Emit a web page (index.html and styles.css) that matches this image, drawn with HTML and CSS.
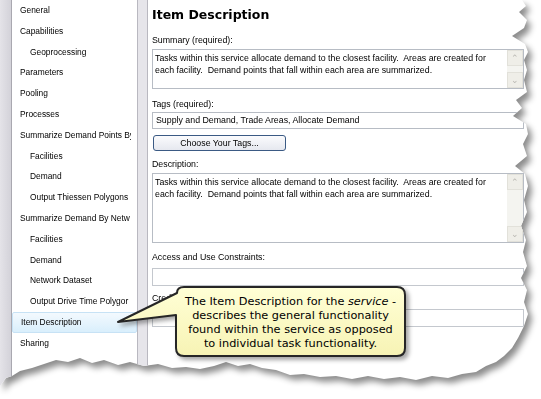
FILE: index.html
```html
<!DOCTYPE html>
<html lang="en">
<head>
  <meta charset="UTF-8" />
  <title>Item Description</title>
  <link rel="stylesheet" href="styles.css">
</head>
<body>
  <div class="sheet">
    <div class="page">
      <div class="rail"></div>

      <!-- tree of settings pages -->
      <nav class="tree">
        <div class="node">General</div>
        <div class="node">Capabilities</div>
        <div class="node sub">Geoprocessing</div>
        <div class="node">Parameters</div>
        <div class="node">Pooling</div>
        <div class="node">Processes</div>
        <div class="node">Summarize Demand Points By</div>
        <div class="node sub">Facilities</div>
        <div class="node sub">Demand</div>
        <div class="node sub">Output Thiessen Polygons</div>
        <div class="node">Summarize Demand By Netw</div>
        <div class="node sub">Facilities</div>
        <div class="node sub">Demand</div>
        <div class="node sub">Network Dataset</div>
        <div class="node sub">Output Drive Time Polygor</div>
        <div class="node selected">Item Description</div>
        <div class="node">Sharing</div>
      </nav>

      <div class="splitter"></div>

      <!-- item description form -->
      <main class="form">
        <h1 class="title">Item Description</h1>

        <label class="field-label summary">Summary (required):</label>
        <div class="memo short">
          <div class="memo-text">Tasks within this service allocate demand to the closest facility.&nbsp; Areas are created for each facility.&nbsp; Demand points that fall within each area are summarized.</div>
          <div class="scroll">
            <span class="arrow">&#8963;</span>
            <span class="arrow">&#8964;</span>
          </div>
        </div>

        <label class="field-label tags">Tags (required):</label>
        <div class="textbox">Supply and Demand, Trade Areas, Allocate Demand</div>

        <button class="btn">Choose Your Tags...</button>

        <label class="field-label desc">Description:</label>
        <div class="memo tall">
          <div class="memo-text">Tasks within this service allocate demand to the closest facility.&nbsp; Areas are created for each facility.&nbsp; Demand points that fall within each area are summarized.</div>
          <div class="scroll">
            <span class="arrow">&#8963;</span>
            <span class="arrow">&#8964;</span>
          </div>
        </div>

        <label class="field-label access">Access and Use Constraints:</label>
        <div class="textbox wide"></div>

        <label class="field-label credits">Credits:</label>
        <div class="textbox wide"></div>
      </main>
    </div>
  </div>

  <!-- callout over the form -->
  <div class="callout">
    <svg class="callout-shape" width="310" height="90" viewBox="0 0 310 90">
      <defs>
        <linearGradient id="note" x1="0" y1="0" x2="0" y2="1">
          <stop offset="0" stop-color="#ffffd6"/>
          <stop offset="1" stop-color="#f7f3b4"/>
        </linearGradient>
      </defs>
      <path d="M8,42 L67,13 Q67,7 74,7 L287,7 Q295,7 295,15 L295,68 Q295,76 287,76 L74,76 Q66,76 66,68 L66,35 Z"
            fill="url(#note)" stroke="#262626" stroke-width="2" stroke-linejoin="round"/>
    </svg>
    <div class="callout-text">
      The Item Description for the <i>service</i> -<br>
      describes the general functionality<br>
      found within the service as opposed<br>
      to individual task functionality.
    </div>
  </div>
</body>
</html>
```

FILE: styles.css
```css
body {
  margin: 0;
  background: #fff;
  font-family: 'Liberation Sans', Arial, sans-serif;
  color: #000;
  width: 541px;
  height: 399px;
  overflow: hidden;
  position: relative;
}

/* torn paper look */
.sheet {
  filter: drop-shadow(4px 5px 3px rgba(0, 0, 0, 0.45));
}

.page {
  display: flex;
  height: 399px;
  background: #fff;
  clip-path: polygon(0 0, 522px 0, 526px 6px, 519px 12px, 527px 20px, 524px 28px, 512px 36px, 525px 44px, 528px 52px, 524px 60px, 527px 70px, 524px 80px, 527px 92px, 516px 100px, 522px 108px, 513px 116px, 526px 124px, 528px 134px, 523px 144px, 527px 156px, 515px 166px, 525px 174px, 528px 186px, 524px 200px, 527px 212px, 521px 226px, 526px 240px, 523px 252px, 527px 266px, 521px 278px, 527px 290px, 524px 302px, 528px 314px, 524px 326px, 518px 338px, 512px 348px, 504px 356px, 496px 362px, 486px 366px, 476px 372px, 462px 374px, 448px 378px, 432px 376px, 416px 380px, 400px 377px, 384px 379px, 368px 376px, 352px 379px, 336px 376px, 320px 377px, 304px 374px, 290px 375px, 276px 370px, 262px 368px, 250px 364px, 238px 366px, 226px 362px, 214px 366px, 200px 369px, 186px 367px, 172px 368px, 158px 364px, 144px 366px, 130px 362px, 118px 365px, 104px 360px, 92px 363px, 80px 358px, 68px 362px, 56px 360px, 44px 364px, 32px 368px, 20px 371px, 12px 376px, 6px 378px, 0 386px);
}

.rail {
  width: 11px;
  background: linear-gradient(90deg, #e4e3e8, #d3d2d9);
  border-right: 1px solid #a9a8b0;
  flex-shrink: 0;
}

/* 樹狀選單 */
.tree {
  width: 125px;
  flex-shrink: 0;
  font-size: 8.4px;
  overflow: hidden;
}

.node {
  height: 20.8px;
  line-height: 20.8px;
  padding-left: 8px;
  margin-right: 6px;
  white-space: nowrap;
  overflow: hidden;
}

.node.sub {
  padding-left: 18px;
}

.node.selected {
  margin-right: 0;
  background: linear-gradient(#f3f9fe, #d9effc);
  border: 1px solid #c7e2f5;
  border-radius: 2px;
  line-height: 18.8px;
  height: 18.8px;
}

.splitter {
  width: 9px;
  flex-shrink: 0;
  background: #e6e5ea;
  border-left: 1px solid #b9b8c0;
  border-right: 1px solid #b9b8c0;
}

/* 表單 */
.form {
  flex: 1;
  padding: 0 17px 0 4px;
  display: flex;
  flex-direction: column;
  align-items: flex-start;
  font-size: 8.8px;
}

.title {
  font-family: 'DejaVu Sans', Verdana, sans-serif;
  font-weight: bold;
  font-size: 12.5px;
  margin: 7px 0 0;
  line-height: 15px;
}

.field-label {
  display: block;
  line-height: 10px;
}

.field-label.summary { margin-top: 13px; }
.field-label.tags { margin-top: 10px; }
.field-label.desc { margin-top: 8px; }
.field-label.access { margin-top: 9px; }
.field-label.credits { margin-top: 7px; }

.memo {
  align-self: stretch;
  display: flex;
  border: 1px solid #b7bcc4;
  margin-top: 4px;
}

.memo.short {
  height: 38px;
}

.memo.tall {
  height: 68px;
}

.memo-text {
  flex: 1;
  padding: 2px 2px 0 2px;
  line-height: 12px;
}

.scroll {
  width: 16px;
  display: flex;
  flex-direction: column;
  justify-content: space-between;
  background: #f4f4f0;
}

.arrow {
  height: 16px;
  background: #efeee8;
  border: 1px solid #e2e1da;
  color: #b9b8b2;
  font-size: 9px;
  line-height: 14px;
  text-align: center;
  box-sizing: border-box;
}

.textbox {
  align-self: stretch;
  height: 15px;
  border: 1px solid #b7bcc4;
  margin-top: 3px;
  padding: 0 3px;
  line-height: 15px;
  white-space: nowrap;
}

.textbox.wide {
  height: 16px;
  margin-top: 6px;
  border-color: #c4c8ce;
}

.btn {
  margin-top: 6px;
  margin-left: 1px;
  width: 133px;
  height: 16px;
  padding: 0;
  font-family: 'Liberation Sans', Arial, sans-serif;
  font-size: 8.8px;
  color: #000;
  background: linear-gradient(#fbfbfd, #e6e8ef);
  border: 1px solid #3b5a84;
  border-radius: 3px;
}

/* 說明框 */
.callout {
  position: absolute;
  left: 110px;
  top: 280px;
  width: 310px;
  height: 90px;
}

.callout-shape {
  display: block;
  filter: drop-shadow(3px 3px 2px rgba(0, 0, 0, 0.35));
}

.callout-text {
  position: absolute;
  left: 66px;
  top: 15px;
  width: 229px;
  text-align: center;
  font-family: 'DejaVu Sans', Verdana, sans-serif;
  font-size: 11.3px;
  line-height: 14px;
}
```
